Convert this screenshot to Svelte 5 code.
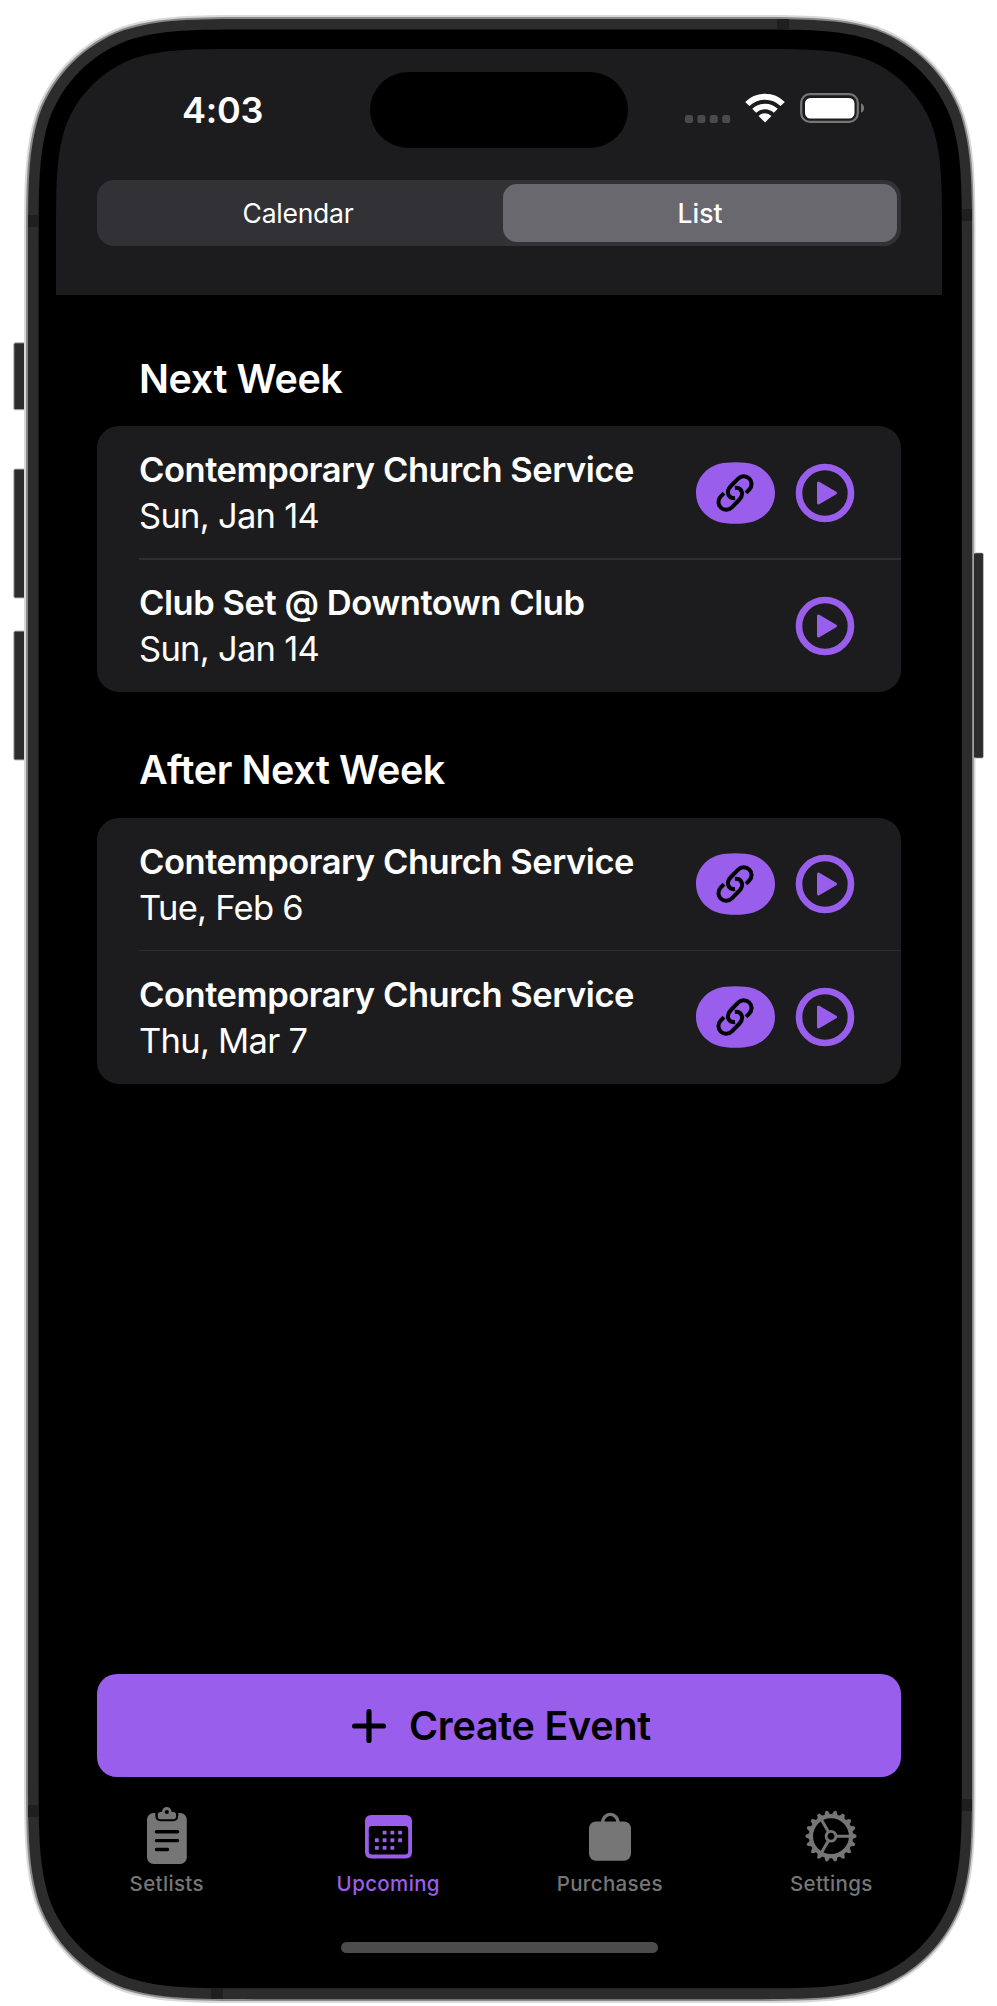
<script>
  // Continuous-curvature rounded rectangle, drawn clockwise from the top edge.
  function squircle(x0, y0, x1, y1, r) {
    const pts = [
      [1.528665, 0], [1.088493, 0], [0.868407, 0], [0.631494, 0.074911],
      [0.372824, 0.169059], [0.16906, 0.372824], [0.074912, 0.631494],
      [0, 0.868407], [0, 1.088493], [0, 1.528665]
    ];
    const corner = (cx, cy, sx, sy, rev) => {
      const list = (rev ? [...pts].reverse() : pts).map(
        ([a, b]) => `${(cx + sx * a * r).toFixed(2)} ${(cy + sy * b * r).toFixed(2)}`
      );
      return [list[0], `C${list.slice(1).join(' ')}`];
    };
    const tr = corner(x1, y0, -1, 1, false);
    const br = corner(x1, y1, -1, -1, true);
    const bl = corner(x0, y1, 1, -1, false);
    const tl = corner(x0, y0, 1, 1, true);
    return `M${tr[0]}${tr[1]}L${br[0]}${br[1]}L${bl[0]}${bl[1]}L${tl[0]}${tl[1]}Z`;
  }

  const rings = [
    { d: squircle(24, 15, 975.5, 2003, 155), fill: '#d9d9d9' },
    { d: squircle(26, 17, 973.7, 2001, 153.5), fill: '#888' },
    { d: squircle(28, 19, 972, 1999.2, 151.5), fill: '#2c2c2c' },
    { d: squircle(38.6, 29.5, 961.8, 1988.3, 142), fill: '#000' }
  ];

  const sections = [
    {
      title: 'Next Week',
      events: [
        { name: 'Contemporary Church Service', date: 'Sun, Jan 14', link: true },
        { name: 'Club Set @ Downtown Club', date: 'Sun, Jan 14', link: false }
      ]
    },
    {
      title: 'After Next Week',
      events: [
        { name: 'Contemporary Church Service', date: 'Tue, Feb 6', link: true },
        { name: 'Contemporary Church Service', date: 'Thu, Mar 7', link: true }
      ]
    }
  ];

  const tabs = ['Setlists', 'Upcoming', 'Purchases', 'Settings'];
  const teeth = Array.from({ length: 18 }, (_, i) => i * 20);
  const days = [
    [1, 0], [2, 0], [3, 0], [0, 1], [1, 1], [2, 1], [3, 1], [0, 2], [1, 2], [2, 2]
  ];

  let view = $state('List');
  let tab = $state('Upcoming');
</script>

<div class="device">
  <svg class="frame" viewBox="0 0 997 2006" width="997" height="2006" aria-hidden="true">
    <g fill="#2c2c2c" stroke="#bbb" stroke-width="1">
      <rect x="13.8" y="342.8" width="14" height="67" rx="1.5" />
      <rect x="13.8" y="469" width="14" height="129" rx="1.5" />
      <rect x="13.8" y="631" width="14" height="129" rx="1.5" />
      <rect x="970" y="553" width="13.3" height="205" rx="1.5" />
    </g>
    {#each rings as ring}
      <path d={ring.d} fill={ring.fill} />
    {/each}
    <rect x="974" y="553.5" width="8.8" height="204" fill="#2c2c2c" />
    <g fill="#1f1f1f">
      <rect x="777" y="19" width="12" height="10" />
      <rect x="28" y="215" width="10.5" height="12" />
      <rect x="962" y="209" width="10" height="12" />
      <rect x="28" y="1805" width="10.5" height="12" />
      <rect x="962" y="1799" width="10" height="12" />
      <rect x="211" y="1988.5" width="12" height="10.5" />
    </g>
  </svg>

  <div class="screen" style:clip-path={`path('${squircle(0, 0, 886, 1920, 124)}')`}>
    <header>
      <div class="status">
        <div class="time">4:03</div>
        <div class="island"></div>
        <div class="signals">
          <svg class="dots" width="46" height="8" viewBox="0 0 46 8" fill="#4a4a4c">
            {#each [0, 12.4, 24.8, 37.2] as x}
              <rect {x} y="0" width="8" height="8" rx="2.6" />
            {/each}
          </svg>
          <svg class="wifi" width="40" height="30" viewBox="0 0 40 30">
            <g fill="none" stroke="#fff">
              <path d="M2.3 11A25 25 0 0 1 37.7 11" stroke-width="6" />
              <path d="M9.2 17.8A15.6 15.6 0 0 1 30.8 17.8" stroke-width="5.6" />
            </g>
            <path d="M20 29.4L13.6 22.9A9 9 0 0 1 26.4 22.9Z" fill="#fff" />
          </svg>
          <svg class="battery" width="66" height="30" viewBox="0 0 66 30">
            <rect x="1.2" y="1.2" width="56.6" height="27.6" rx="8.5" fill="none" stroke="#767677" stroke-width="2.2" />
            <rect x="5" y="5" width="49.5" height="20.5" rx="5.5" fill="#fff" />
            <path d="M61 10.2A5.3 5.3 0 0 1 61 19.8Z" fill="#767677" />
          </svg>
        </div>
      </div>
      <div class="segmented">
        {#each ['Calendar', 'List'] as option}
          <button class:selected={view === option} onclick={() => (view = option)}>{option}</button>
        {/each}
      </div>
    </header>

    <main>
      {#each sections as section}
        <section>
          <h2>{section.title}</h2>
          <div class="card">
            {#each section.events as event}
              <div class="row">
                <div class="info">
                  <div class="name">{event.name}</div>
                  <div class="date">{event.date}</div>
                </div>
                {#if event.link}
                  <svg class="link" width="79" height="62" viewBox="0 0 79 62">
                    <path
                      d="M30 .8Q39.5-.2 49 .8C66 2 79 15 79 31S66 60 49 61.2Q39.5 62.2 30 61.2C13 60 0 47 0 31S13 2 30 .8Z"
                      fill="#995eeb"
                    />
                    <g fill="none" stroke="#000" stroke-width="4" transform="translate(39 31) rotate(-46)">
                      <path d="M7.8 7.8H12.6A7.8 7.8 0 0 0 12.6-7.8H2.2C-6-7.8-8.8-.8-3.6 3.6" />
                      <path d="M-7.8-7.8H-12.6A7.8 7.8 0 0 0-12.6 7.8H-2.2C6 7.8 8.8 .8 3.6-3.6" />
                    </g>
                  </svg>
                {/if}
                <svg class="play" width="60" height="60" viewBox="0 0 60 60">
                  <circle cx="30" cy="30" r="26" fill="none" stroke="#995eeb" stroke-width="6.6" />
                  <path
                    d="M23.5 20L40.5 30L23.5 40Z"
                    fill="#995eeb" stroke="#995eeb" stroke-width="3" stroke-linejoin="round"
                  />
                </svg>
              </div>
            {/each}
          </div>
        </section>
      {/each}
    </main>

    <button class="create">
      <svg width="34" height="34" viewBox="0 0 34 34" fill="none" stroke="#000" stroke-width="5.2" stroke-linecap="round">
        <path d="M17 2.6V31.4M2.6 17H31.4" />
      </svg>
      <span>Create Event</span>
    </button>

    <nav>
      {#each tabs as name}
        <button class:active={tab === name} onclick={() => (tab = name)}>
          {#if name === 'Setlists'}
            <svg width="60" height="64" viewBox="0 0 60 64">
              <rect x="10" y="10" width="39.8" height="51" rx="6.5" fill="currentColor" />
              <path d="M18.3 8H41.3V12.6Q41.3 18.3 36 18.3H23.6Q18.3 18.3 18.3 12.6Z" fill="#000" />
              <rect x="20.8" y="9" width="18.2" height="7.2" rx="2.6" fill="currentColor" />
              <circle cx="29.8" cy="8.9" r="4.8" fill="currentColor" />
              <circle cx="29.8" cy="9" r="2.1" fill="#000" />
              <path d="M19.4 28.8H40.6M19.4 37.6H40.6M19.4 46.5H30.6" stroke="#000" stroke-width="3.4" stroke-linecap="round" />
            </svg>
          {:else if name === 'Upcoming'}
            <svg width="60" height="64" viewBox="0 0 60 64">
              <path
                fill-rule="evenodd"
                d="M13.5 12H47.5Q54 12 54 18.5V49Q54 55.5 47.5 55.5H13.5Q7 55.5 7 49V18.5Q7 12 13.5 12ZM14 23Q10.8 23 10.8 26.2V48.3Q10.8 51.5 14 51.5H47Q50.2 51.5 50.2 48.3V26.2Q50.2 23 47 23Z"
                fill="currentColor"
              />
              {#each days as [col, line]}
                <rect x={16.9 + col * 7.75} y={27.7 + line * 7.6} width="3.9" height="3.9" rx=".8" fill="currentColor" />
              {/each}
            </svg>
          {:else if name === 'Purchases'}
            <svg width="60" height="64" viewBox="0 0 60 64">
              <rect x="9" y="18.5" width="42" height="39.3" rx="7" fill="currentColor" />
              <path d="M22.5 20A7.8 8.6 0 0 1 38.1 20" fill="none" stroke="currentColor" stroke-width="3.3" />
            </svg>
          {:else}
            <svg width="60" height="64" viewBox="0 0 60 64">
              <g transform="translate(30 33.2)">
                {#each teeth as angle}
                  <path d="M20-3.6L25-1.4Q26.4 0 25 1.4L20 3.6Z" fill="currentColor" transform={`rotate(${angle})`} />
                {/each}
                <g fill="none" stroke="currentColor">
                  <circle r="20" stroke-width="4.2" />
                  <circle r="4.9" stroke-width="2.8" />
                  <path d="M5.5 0H20M-2.75 4.76L-10 17.3M-2.75-4.76L-10-17.3" stroke-width="3" />
                </g>
              </g>
            </svg>
          {/if}
          <span>{name}</span>
        </button>
      {/each}
    </nav>
    <div class="home"></div>
  </div>
</div>

<style>
  :global(body) {
    background: #fff;
  }

  .device {
    position: relative;
    box-sizing: border-box;
    width: 997px;
    height: 2006px;
    padding: 49px 55px 37px 56px;
    font-family: Inter, 'Liberation Sans', sans-serif;
    color: #fff;
  }

  .frame {
    position: absolute;
    inset: 0;
  }

  .screen {
    position: relative;
    display: flex;
    flex-direction: column;
    width: 886px;
    height: 1920px;
    background: #000;
  }

  svg {
    display: block;
    flex: none;
  }

  button {
    margin: 0;
    padding: 0;
    border: 0;
    background: none;
    color: inherit;
    font: inherit;
    letter-spacing: inherit;
  }

  header {
    box-sizing: border-box;
    flex: none;
    height: 246px;
    padding: 23px 41px 0;
    background: #1c1c1e;
  }

  .status {
    display: grid;
    grid-template-columns: 273px 258px 1fr;
    height: 108px;
  }

  .time {
    padding: 17px 0 0 85px;
    font-size: 36px;
    font-weight: 600;
    line-height: 42px;
    letter-spacing: -0.2px;
  }

  .island {
    height: 76px;
    border-radius: 38px;
    background: #000;
  }

  .signals {
    display: flex;
    align-items: flex-end;
    height: 51px;
    padding-left: 57px;
  }

  .wifi {
    margin-left: 14px;
  }

  .battery {
    margin-left: 15px;
  }

  .segmented {
    box-sizing: border-box;
    display: grid;
    grid-template-columns: 1fr 394px;
    height: 66px;
    padding: 4px;
    border-radius: 17px;
    background: #323136;
    font-size: 26.5px;
    letter-spacing: -0.25px;
  }

  .segmented button {
    padding-right: 8px;
    border-radius: 14px;
  }

  .segmented .selected {
    padding-right: 0;
    background: #69686e;
    font-weight: 500;
    letter-spacing: 0;
  }

  main {
    flex: 1;
    padding: 59.5px 41px 0;
  }

  section {
    margin-bottom: 54px;
  }

  h2 {
    margin: 0 0 22.5px 42px;
    font-size: 39.5px;
    font-weight: 600;
    line-height: 49px;
    letter-spacing: -0.4px;
  }

  .card {
    border-radius: 22px;
    background: #1c1c1e;
  }

  .row {
    position: relative;
    box-sizing: border-box;
    display: flex;
    align-items: center;
    height: 133px;
    padding: 1px 46px 0 42px;
  }

  .row + .row::before {
    content: '';
    position: absolute;
    inset: -1px 0 auto 42px;
    height: 1.5px;
    background: #2e2e30;
  }

  .info {
    flex: 1;
    font-size: 34.5px;
    line-height: 46px;
  }

  .name {
    font-weight: 600;
    letter-spacing: -0.45px;
  }

  .date {
    letter-spacing: -0.72px;
  }

  .row svg {
    margin-top: -1px;
  }

  .link {
    margin-right: 20px;
  }

  .create {
    display: flex;
    flex: none;
    align-items: center;
    justify-content: center;
    gap: 23px;
    height: 103px;
    margin: 0 41px;
    padding-left: 5px;
    border-radius: 20px;
    background: #995eeb;
    color: #000;
    font-size: 39.5px;
    font-weight: 600;
    letter-spacing: -0.25px;
  }

  nav {
    display: grid;
    flex: none;
    grid-template-columns: repeat(4, 1fr);
    height: 165px;
  }

  nav button {
    display: flex;
    flex-direction: column;
    align-items: center;
    padding-top: 26px;
    color: #767676;
    font-size: 20.5px;
    font-weight: 500;
    line-height: 26px;
    letter-spacing: 0.35px;
  }

  nav svg {
    margin-bottom: 4px;
  }

  nav .active {
    color: #995eeb;
  }

  .home {
    flex: none;
    width: 317px;
    height: 11px;
    margin: 0 auto 16px;
    border-radius: 6px;
    background: #4c4c4c;
  }
</style>
